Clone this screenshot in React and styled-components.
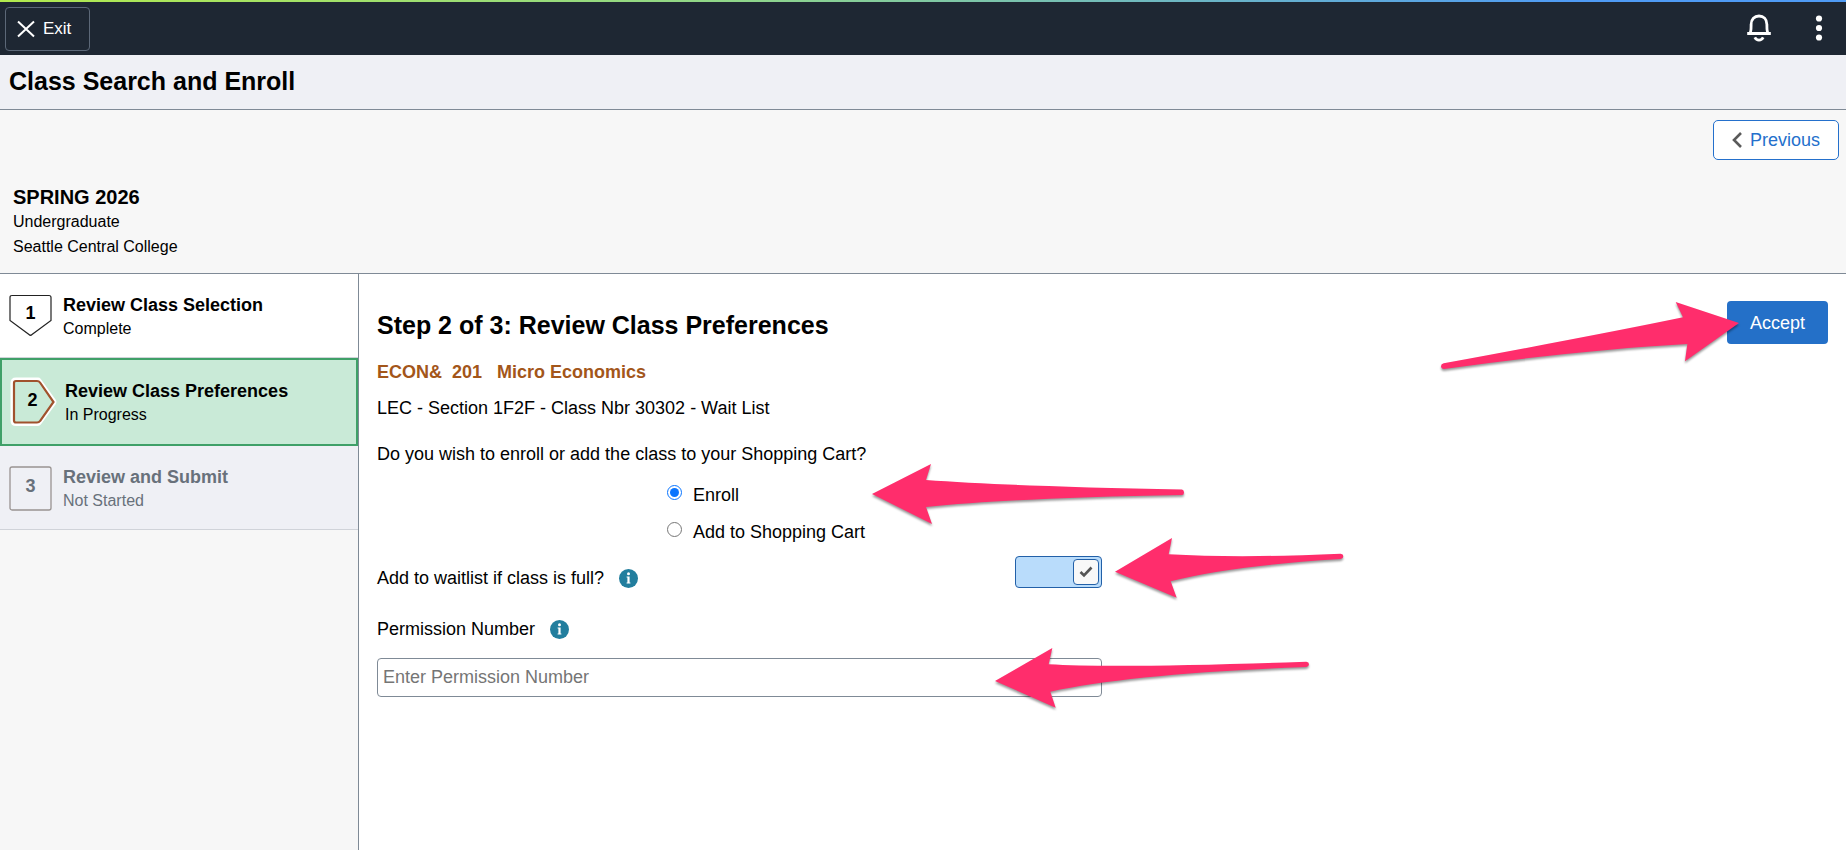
import { useState } from "react"
import styled, { createGlobalStyle, css } from "styled-components"

const GlobalStyle = createGlobalStyle`
  *, *::before, *::after {
    box-sizing: border-box;
  }
  body {
    margin: 0;
    background: #fff;
    color: #000;
    font-family: "Liberation Sans", Arial, sans-serif;
    font-size: 18px;
    line-height: 24px;
  }
  button, input {
    font: inherit;
  }
  h1, h2, h3, p, ol, fieldset {
    margin: 0;
    padding: 0;
    border: 0;
  }
`

const Page = styled.div`
  min-height: 100vh;
  display: flex;
  flex-direction: column;
`

const Banner = styled.header`
  display: flex;
  align-items: center;
  justify-content: space-between;
  height: 55px;
  padding: 0 11px 0 5px;
  background: #1e2733;
  border-top: 2px solid;
  border-image: linear-gradient(90deg, #b2ea4e, #8fd68a 40%, #4f9bf5 85%, #4f9bf5) 1;
`

const ExitButton = styled.button`
  display: flex;
  align-items: center;
  gap: 8px;
  height: 44px;
  padding: 0 18px 0 11px;
  border: 1px solid #5c6878;
  border-radius: 4px;
  background: transparent;
  color: #fff;
  font-size: 17px;
  cursor: pointer;
`

const BannerActions = styled.div`
  display: flex;
  align-items: center;
  gap: 28px;
  padding-bottom: 2px;
`

const IconButton = styled.button`
  display: flex;
  align-items: center;
  justify-content: center;
  width: 32px;
  height: 32px;
  padding: 0;
  border: 0;
  background: transparent;
  color: #fff;
  cursor: pointer;
`

const TitleBar = styled.div`
  padding: 11px 9px 13px;
  background: #eff0f5;
  border-bottom: 1px solid #7f8a96;
`

const PageTitle = styled.h1`
  font-size: 25px;
  line-height: 30px;
`

const TermBar = styled.section`
  display: flex;
  flex-direction: column;
  padding: 10px 7px 14px 13px;
  background: #f7f7f7;
  border-bottom: 1px solid #7f8a96;
`

const PreviousButton = styled.button`
  display: flex;
  align-items: center;
  align-self: flex-end;
  gap: 8px;
  height: 40px;
  margin-bottom: 25px;
  padding: 0 18px;
  border: 1px solid #2470cc;
  border-radius: 5px;
  background: #fff;
  color: #2470cc;
  cursor: pointer;
`

const TermName = styled.h2`
  font-size: 20px;
  line-height: 24px;
`

const TermDetail = styled.p`
  font-size: 16px;
  line-height: 25px;
`

const Body = styled.div`
  display: flex;
  flex: 1;
`

const Sidebar = styled.nav`
  flex: 0 0 359px;
  background: #f7f7f7;
  border-right: 1px solid #7f8a96;
`

const StepList = styled.ol`
  list-style: none;
`

const StepItem = styled.li`
  display: flex;
  align-items: flex-start;
  gap: 11px;
  height: 84px;
  padding: 18px 9px;
  background: #fff;
  border-bottom: 1px solid #d0d3d9;

  ${({ $status }) => $status === "current" && css`
    height: 88px;
    background: #c9ead7;
    border: 2px solid #3fa068;
  `}

  ${({ $status }) => $status === "pending" && css`
    background: #eff0f5;
    color: #68717b;
  `}
`

const Marker = styled.span`
  position: relative;
  flex: none;
  width: 43px;
  height: 48px;
  text-align: center;
  font-size: 18px;
  font-weight: bold;
  line-height: ${({ $status }) => ($status === "complete" ? "42px" : "45px")};
`

const MarkerShape = styled.svg`
  position: absolute;
  top: 0;
  left: 0;
  overflow: visible;
`

const MarkerNumber = styled.span`
  position: relative;
`

const StepText = styled.div`
  padding-top: 1px;
`

const StepTitle = styled.h3`
  font-size: 18px;
  line-height: 24px;
`

const StepStatus = styled.p`
  font-size: 16px;
  line-height: 24px;
`

const Main = styled.main`
  flex: 1;
  min-width: 0;
  padding: 27px 18px 40px;
`

const HeadingRow = styled.div`
  display: flex;
  align-items: flex-start;
  justify-content: space-between;
`

const StepHeading = styled.h2`
  padding-top: 9px;
  font-size: 25px;
  line-height: 30px;
`

const Anchor = styled.div`
  position: relative;
`

const AcceptButton = styled.button`
  display: block;
  height: 43px;
  padding: 0 23px;
  border: 0;
  border-radius: 4px;
  background: #2470c8;
  color: #fff;
  cursor: pointer;
`

const CourseName = styled.h3`
  margin-top: 16px;
  color: #a3561a;
  font-size: 18px;
  line-height: 24px;
  white-space: pre-wrap;
`

const SectionLine = styled.p`
  margin-top: 12px;
`

const Form = styled.form`
  max-width: 725px;
  margin-top: 22px;
`

const Choices = styled.fieldset`
  legend {
    padding: 0;
  }
`

const ChoiceLabel = styled.label`
  display: flex;
  align-items: center;
  gap: 11px;
  width: fit-content;
  height: 24px;
  margin: ${({ $first }) => ($first ? "17px" : "13px")} 0 0 40%;
`

const Radio = styled.input`
  width: 15px;
  height: 15px;
  margin: 0 0 6px;
  accent-color: #0a75ff;
`

const Row = styled.div`
  position: relative;
  display: flex;
  align-items: flex-end;
  justify-content: space-between;
  margin-top: 12px;
`

const FieldLabel = styled.div`
  display: flex;
  align-items: center;
  gap: 14px;
`

const InfoButton = styled(IconButton)`
  width: 20px;
  height: 20px;
`

const Switch = styled.label`
  position: relative;
  display: flex;
  width: 87px;
  height: 32px;
  margin-bottom: 2px;
  cursor: pointer;

  input {
    appearance: none;
    width: 100%;
    height: 100%;
    margin: 0;
    border: 1px solid #2260a8;
    border-radius: 4px;
    background: #fff;
    cursor: pointer;
  }
  input:checked {
    background: #b9dcfb;
  }
`

const Knob = styled.span`
  position: absolute;
  top: 3px;
  ${({ $on }) => ($on ? "right: 3px;" : "left: 3px;")}
  display: flex;
  align-items: center;
  justify-content: center;
  width: 26px;
  height: 26px;
  border: 1px solid #2260a8;
  border-radius: 4px;
  background: #f8f8f8;
  pointer-events: none;
`

const PermissionField = styled.div`
  position: relative;
  margin-top: 27px;
`

const TextInput = styled.input`
  display: block;
  width: 100%;
  height: 39px;
  margin-top: 17px;
  padding: 0 5px;
  border: 1px solid #7f8a96;
  border-radius: 4px;
  background: #fff;

  &::placeholder {
    color: #757575;
  }
`

// Pink pointers drawn over the page
const Pointer = styled.svg`
  position: absolute;
  top: ${({ $top }) => $top};
  left: ${({ $left }) => $left || "auto"};
  right: ${({ $right }) => $right || "auto"};
  z-index: 2;
  overflow: visible;
  fill: #ff2d6c;
  filter: drop-shadow(0 2px 1px rgba(0, 0, 0, 0.4));
  pointer-events: none;
`

const CloseIcon = () => (
  <svg width="18" height="18" viewBox="0 0 18 18" fill="none" stroke="currentColor" strokeWidth="2" aria-hidden="true">
    <path d="M1 1.5 17 16.5M17 1.5 1 16.5" />
  </svg>
)

const BellIcon = () => (
  <svg width="26" height="30" viewBox="0 0 26 30" fill="none" stroke="currentColor" strokeWidth="2.8" aria-hidden="true">
    <path d="M1.200 20.500H24.800M4 20C5.200 18.500 5.100 16 5.100 11.500C5.100 6 8.500 3 13 3S20.900 6 20.900 11.500C20.900 16 20.800 18.500 22 20" />
    <path d="M8.800 24.400C10.600 27.900 15.400 27.900 17.200 24.400" />
  </svg>
)

const MoreIcon = () => (
  <svg width="8" height="28" viewBox="0 0 8 28" fill="currentColor" aria-hidden="true">
    <circle cx="4" cy="4.5" r="3.1" />
    <circle cx="4" cy="14" r="3.1" />
    <circle cx="4" cy="23.5" r="3.1" />
  </svg>
)

const ChevronLeft = () => (
  <svg width="10" height="16" viewBox="0 0 10 16" fill="none" stroke="#5a5a5a" strokeWidth="2.6" aria-hidden="true">
    <path d="M9 1 2 8 9 15" />
  </svg>
)

const InfoIcon = () => (
  <svg width="19" height="19" viewBox="0 0 19 19" aria-hidden="true">
    <circle cx="9.5" cy="9.5" r="9.5" fill="#227e9e" />
    <circle cx="9.5" cy="4.8" r="1.5" fill="#fff" />
    <path fill="#fff" d="M7.6 7.600h3v6h0.800v1H7.600v-1h0.800V8.600H7.600z" />
  </svg>
)

const CheckIcon = () => (
  <svg width="14" height="12" viewBox="0 0 14 12" fill="none" stroke="#555" strokeWidth="2.6" aria-hidden="true">
    <path d="M1.5 6 5 9.5 12.5 1.5" />
  </svg>
)

const StepMarker = ({ number, status }) => (
  <Marker $status={status}>
    <MarkerShape width="43" height="48" viewBox="0 0 43 48" fill="none" aria-hidden="true">
      {status === "complete" && (
        <path
          d="M3 3.5H40Q42 3.5 42 5.5V28.5L23 42.5Q21.5 44 20 42.5L1 28.5V5.5Q1 3.5 3 3.5Z"
          stroke="#222"
          strokeWidth="1.2"
        />
      )}
      {status === "current" && (
        <>
          <path d="M5 3H27L42 24L27 44.500H5Q3 44.500 3 42.500V5Q3 3 5 3Z" stroke="#fff" strokeWidth="7" strokeLinejoin="round" />
          <path d="M5 3H26Q28 3 29 4.500L42.500 24L29 43Q28 44.500 26 44.500H5Q3 44.500 3 42.500V5Q3 3 5 3Z" fill="#c9ead7" stroke="#a0522d" strokeWidth="2.200" />
        </>
      )}
      {status === "pending" && (
        <rect x="1" y="3" width="41" height="43" rx="2" stroke="#999391" strokeWidth="1.300" />
      )}
    </MarkerShape>
    <MarkerNumber>{number}</MarkerNumber>
  </Marker>
)

const steps = [
  { number: 1, title: "Review Class Selection", label: "Complete", status: "complete" },
  { number: 2, title: "Review Class Preferences", label: "In Progress", status: "current" },
  { number: 3, title: "Review and Submit", label: "Not Started", status: "pending" },
]

const App = () => {
  const [action, setAction] = useState("enroll")
  const [waitlist, setWaitlist] = useState(true)
  const [permission, setPermission] = useState("")

  return (
    <Page>
      <GlobalStyle />
      <Banner>
        <ExitButton type="button">
          <CloseIcon />
          Exit
        </ExitButton>
        <BannerActions>
          <IconButton type="button" aria-label="Notifications">
            <BellIcon />
          </IconButton>
          <IconButton type="button" aria-label="Actions">
            <MoreIcon />
          </IconButton>
        </BannerActions>
      </Banner>

      <TitleBar>
        <PageTitle>Class Search and Enroll</PageTitle>
      </TitleBar>

      <TermBar>
        <PreviousButton type="button">
          <ChevronLeft />
          Previous
        </PreviousButton>
        <TermName>SPRING 2026</TermName>
        <TermDetail>Undergraduate</TermDetail>
        <TermDetail>Seattle Central College</TermDetail>
      </TermBar>

      <Body>
        <Sidebar aria-label="Enrollment steps">
          <StepList>
            {steps.map((step) => (
              <StepItem
                key={step.number}
                $status={step.status}
                aria-current={step.status === "current" ? "step" : undefined}
              >
                <StepMarker number={step.number} status={step.status} />
                <StepText>
                  <StepTitle>{step.title}</StepTitle>
                  <StepStatus>{step.label}</StepStatus>
                </StepText>
              </StepItem>
            ))}
          </StepList>
        </Sidebar>

        <Main>
          <HeadingRow>
            <StepHeading>Step 2 of 3: Review Class Preferences</StepHeading>
            <Anchor>
              <AcceptButton type="submit" form="preferences">Accept</AcceptButton>
              <Pointer $top="1px" $right="89px" width="298" height="68" viewBox="64 66 894 204" aria-hidden="true">
                <path d="M958 129 768 66 790 112Q560 160 72 250Q64 252 64 259T73 267Q480 210 803 192L796 244Z" />
              </Pointer>
            </Anchor>
          </HeadingRow>

          <CourseName>{"ECON&  201   Micro Economics"}</CourseName>
          <SectionLine>LEC - Section 1F2F - Class Nbr 30302 - Wait List</SectionLine>

          <Form id="preferences" onSubmit={(e) => e.preventDefault()}>
            <Anchor>
              <Choices>
                <legend>Do you wish to enroll or add the class to your Shopping Cart?</legend>
                <ChoiceLabel $first>
                  <Radio
                    type="radio"
                    name="action"
                    checked={action === "enroll"}
                    onChange={() => setAction("enroll")}
                  />
                  Enroll
                </ChoiceLabel>
                <ChoiceLabel>
                  <Radio
                    type="radio"
                    name="action"
                    checked={action === "cart"}
                    onChange={() => setAction("cart")}
                  />
                  Add to Shopping Cart
                </ChoiceLabel>
              </Choices>
              <Pointer $top="22px" $left="495px" width="312" height="60" viewBox="0 0 312 60" aria-hidden="true">
                <path d="M0 30 59 0 54 16Q135 22 310 25.500Q312 26 312 28.500T310 31Q140 34 54 43L60 60Z" />
              </Pointer>
            </Anchor>

            <Row>
              <FieldLabel>
                <label htmlFor="waitlist">Add to waitlist if class is full?</label>
                <InfoButton type="button" aria-label="About the waitlist">
                  <InfoIcon />
                </InfoButton>
              </FieldLabel>
              <Switch>
                <input
                  id="waitlist"
                  type="checkbox"
                  role="switch"
                  checked={waitlist}
                  onChange={(e) => setWaitlist(e.target.checked)}
                />
                <Knob $on={waitlist}>{waitlist && <CheckIcon />}</Knob>
              </Switch>
              <Pointer $top="-18px" $left="738px" width="228" height="60" viewBox="466 26 684 180" aria-hidden="true">
                <path d="M466 127 637 26 627 75Q850 87 1143 73Q1151 74 1151 81T1143 89Q810 110 633 156L651 205Z" />
              </Pointer>
            </Row>

            <PermissionField>
              <FieldLabel>
                <label htmlFor="permission">Permission Number</label>
                <InfoButton type="button" aria-label="About the permission number">
                  <InfoIcon />
                </InfoButton>
              </FieldLabel>
              <TextInput
                id="permission"
                type="text"
                placeholder="Enter Permission Number"
                value={permission}
                onChange={(e) => setPermission(e.target.value)}
              />
              <Pointer $top="31px" $left="618px" width="314" height="60" viewBox="106 353 942 180" aria-hidden="true">
                <path d="M106 452 278 353 267 402Q480 414 1040 394Q1048 395 1048 402T1040 410Q520 430 272 484L288 532Z" />
              </Pointer>
            </PermissionField>
          </Form>
        </Main>
      </Body>
    </Page>
  )
}

export default App
